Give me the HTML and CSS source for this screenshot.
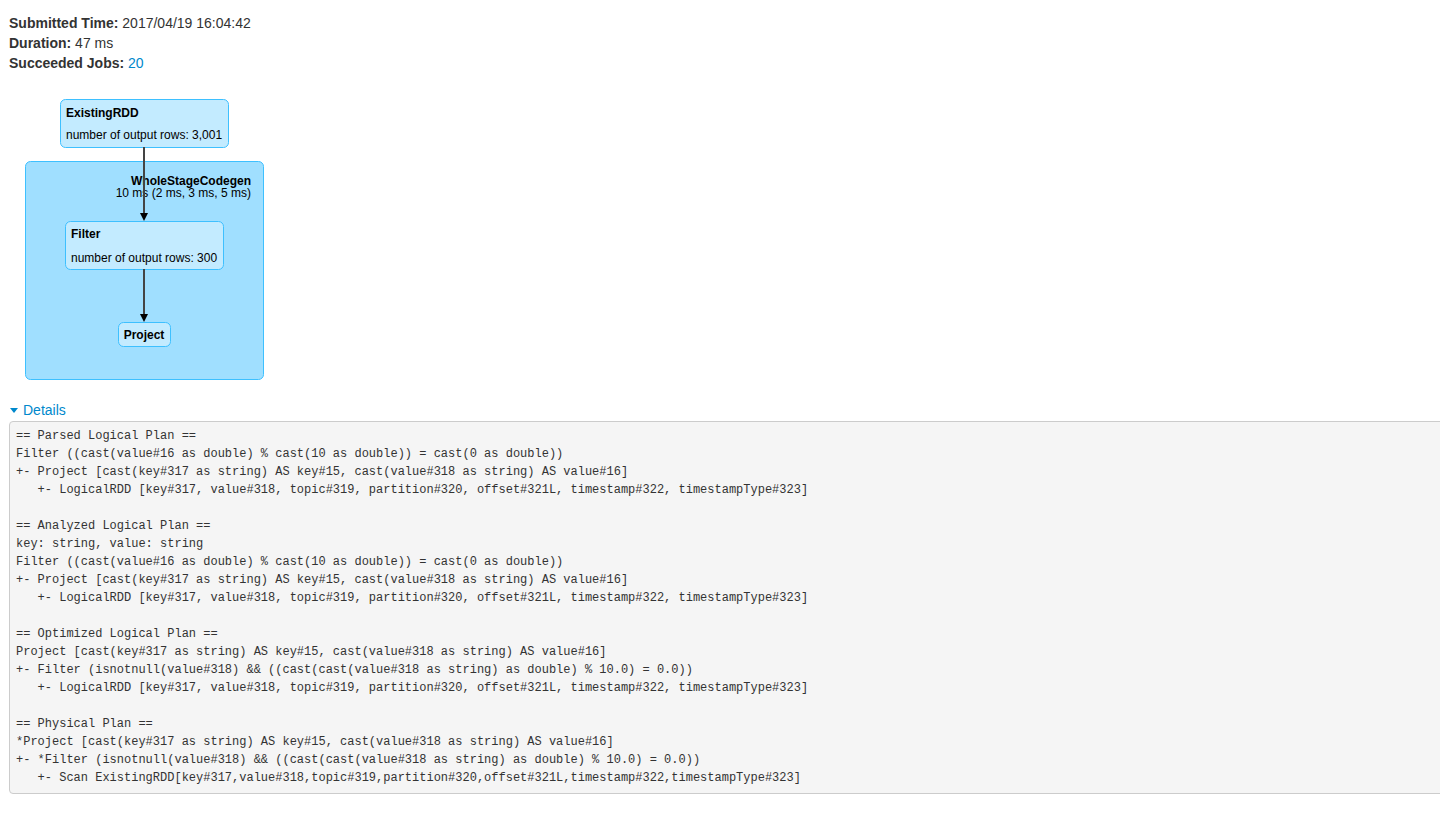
FILE: index.html
```html
<!DOCTYPE html>
<html lang="en">
<head>
  <meta charset="UTF-8">
  <title>Details for Query</title>
  <link rel="stylesheet" href="styles.css">
</head>
<body>
  <div class="container">
    <ul class="summary">
      <li><strong>Submitted Time:</strong> 2017/04/19 16:04:42</li>
      <li><strong>Duration:</strong> 47 ms</li>
      <li><strong>Succeeded Jobs:</strong> <a href="#">20</a></li>
    </ul>

    <svg class="plan-graph" width="280" height="310" viewBox="0 0 280 310">
      <rect class="cluster" x="16.5" y="71.5" width="238" height="218" rx="5"></rect>
      <text class="label bold" x="242" y="95" text-anchor="end">WholeStageCodegen</text>
      <text class="label" x="242" y="107" text-anchor="end">10 ms (2 ms, 3 ms, 5 ms)</text>

      <rect class="node" x="51.5" y="9.5" width="168" height="48" rx="5"></rect>
      <text class="label bold" x="57" y="27">ExistingRDD</text>
      <text class="label" x="57" y="49">number of output rows: 3,001</text>

      <rect class="node" x="56.5" y="131.5" width="158" height="48" rx="5"></rect>
      <text class="label bold" x="62" y="148">Filter</text>
      <text class="label" x="62" y="172">number of output rows: 300</text>

      <rect class="node" x="109.5" y="232.5" width="52" height="24" rx="5"></rect>
      <text class="label bold" x="135" y="249" text-anchor="middle">Project</text>

      <line class="edge" x1="135" y1="57" x2="135" y2="124"></line>
      <polygon class="arrow" points="131,123 139,123 135,131"></polygon>
      <line class="edge" x1="135" y1="179" x2="135" y2="225"></line>
      <polygon class="arrow" points="131,224 139,224 135,232"></polygon>
    </svg>

    <div class="details-toggle">
      <span class="caret"></span><a href="#">Details</a>
    </div>
    <pre class="plan-text">== Parsed Logical Plan ==
Filter ((cast(value#16 as double) % cast(10 as double)) = cast(0 as double))
+- Project [cast(key#317 as string) AS key#15, cast(value#318 as string) AS value#16]
   +- LogicalRDD [key#317, value#318, topic#319, partition#320, offset#321L, timestamp#322, timestampType#323]

== Analyzed Logical Plan ==
key: string, value: string
Filter ((cast(value#16 as double) % cast(10 as double)) = cast(0 as double))
+- Project [cast(key#317 as string) AS key#15, cast(value#318 as string) AS value#16]
   +- LogicalRDD [key#317, value#318, topic#319, partition#320, offset#321L, timestamp#322, timestampType#323]

== Optimized Logical Plan ==
Project [cast(key#317 as string) AS key#15, cast(value#318 as string) AS value#16]
+- Filter (isnotnull(value#318) &amp;&amp; ((cast(cast(value#318 as string) as double) % 10.0) = 0.0))
   +- LogicalRDD [key#317, value#318, topic#319, partition#320, offset#321L, timestamp#322, timestampType#323]

== Physical Plan ==
*Project [cast(key#317 as string) AS key#15, cast(value#318 as string) AS value#16]
+- *Filter (isnotnull(value#318) &amp;&amp; ((cast(cast(value#318 as string) as double) % 10.0) = 0.0))
   +- Scan ExistingRDD[key#317,value#318,topic#319,partition#320,offset#321L,timestamp#322,timestampType#323]</pre>
  </div>
</body>
</html>
```

FILE: styles.css
```css
body {
  margin: 0;
  font-family: "Liberation Sans", Arial, sans-serif;
  font-size: 14px;
  line-height: 20px;
  color: #333;
  background: #fff;
}

a {
  color: #0088cc;
  text-decoration: none;
}

.container {
  padding: 13px 0 20px 9px;
  overflow: hidden;
}

/* Query summary */
.summary {
  list-style: none;
  margin: 0;
  padding: 0;
}

.summary strong {
  font-weight: bold;
}

/* Plan graph */
.plan-graph {
  display: block;
  margin-top: 17px;
}

.plan-graph .cluster {
  fill: #a0dfff;
  stroke: #3ec0ff;
  stroke-width: 1px;
}

.plan-graph .node {
  fill: #c3ebff;
  stroke: #3ec0ff;
  stroke-width: 1px;
}

.plan-graph .label {
  font-family: "Liberation Sans", Arial, sans-serif;
  font-size: 12px;
  fill: #000;
}

.plan-graph .bold {
  font-weight: bold;
}

.plan-graph .edge {
  stroke: #444;
  stroke-width: 2px;
}

.plan-graph .arrow {
  fill: #000;
}

/* Details */
.details-toggle {
  height: 20px;
  line-height: 20px;
}

.caret {
  display: inline-block;
  width: 0;
  height: 0;
  border-left: 4px solid transparent;
  border-right: 4px solid transparent;
  border-top: 5px solid #0088cc;
  vertical-align: middle;
  margin: 0 5px 2px 1px;
}

.plan-text {
  margin: 1px 0 0;
  width: 1460px;
  padding: 5px 6px 6px;
  background: #f5f5f5;
  border: 1px solid #cccccc;
  border-radius: 4px;
  font-family: "Liberation Mono", "Courier New", monospace;
  font-size: 12px;
  line-height: 18px;
  color: #333;
  white-space: pre;
}
```
